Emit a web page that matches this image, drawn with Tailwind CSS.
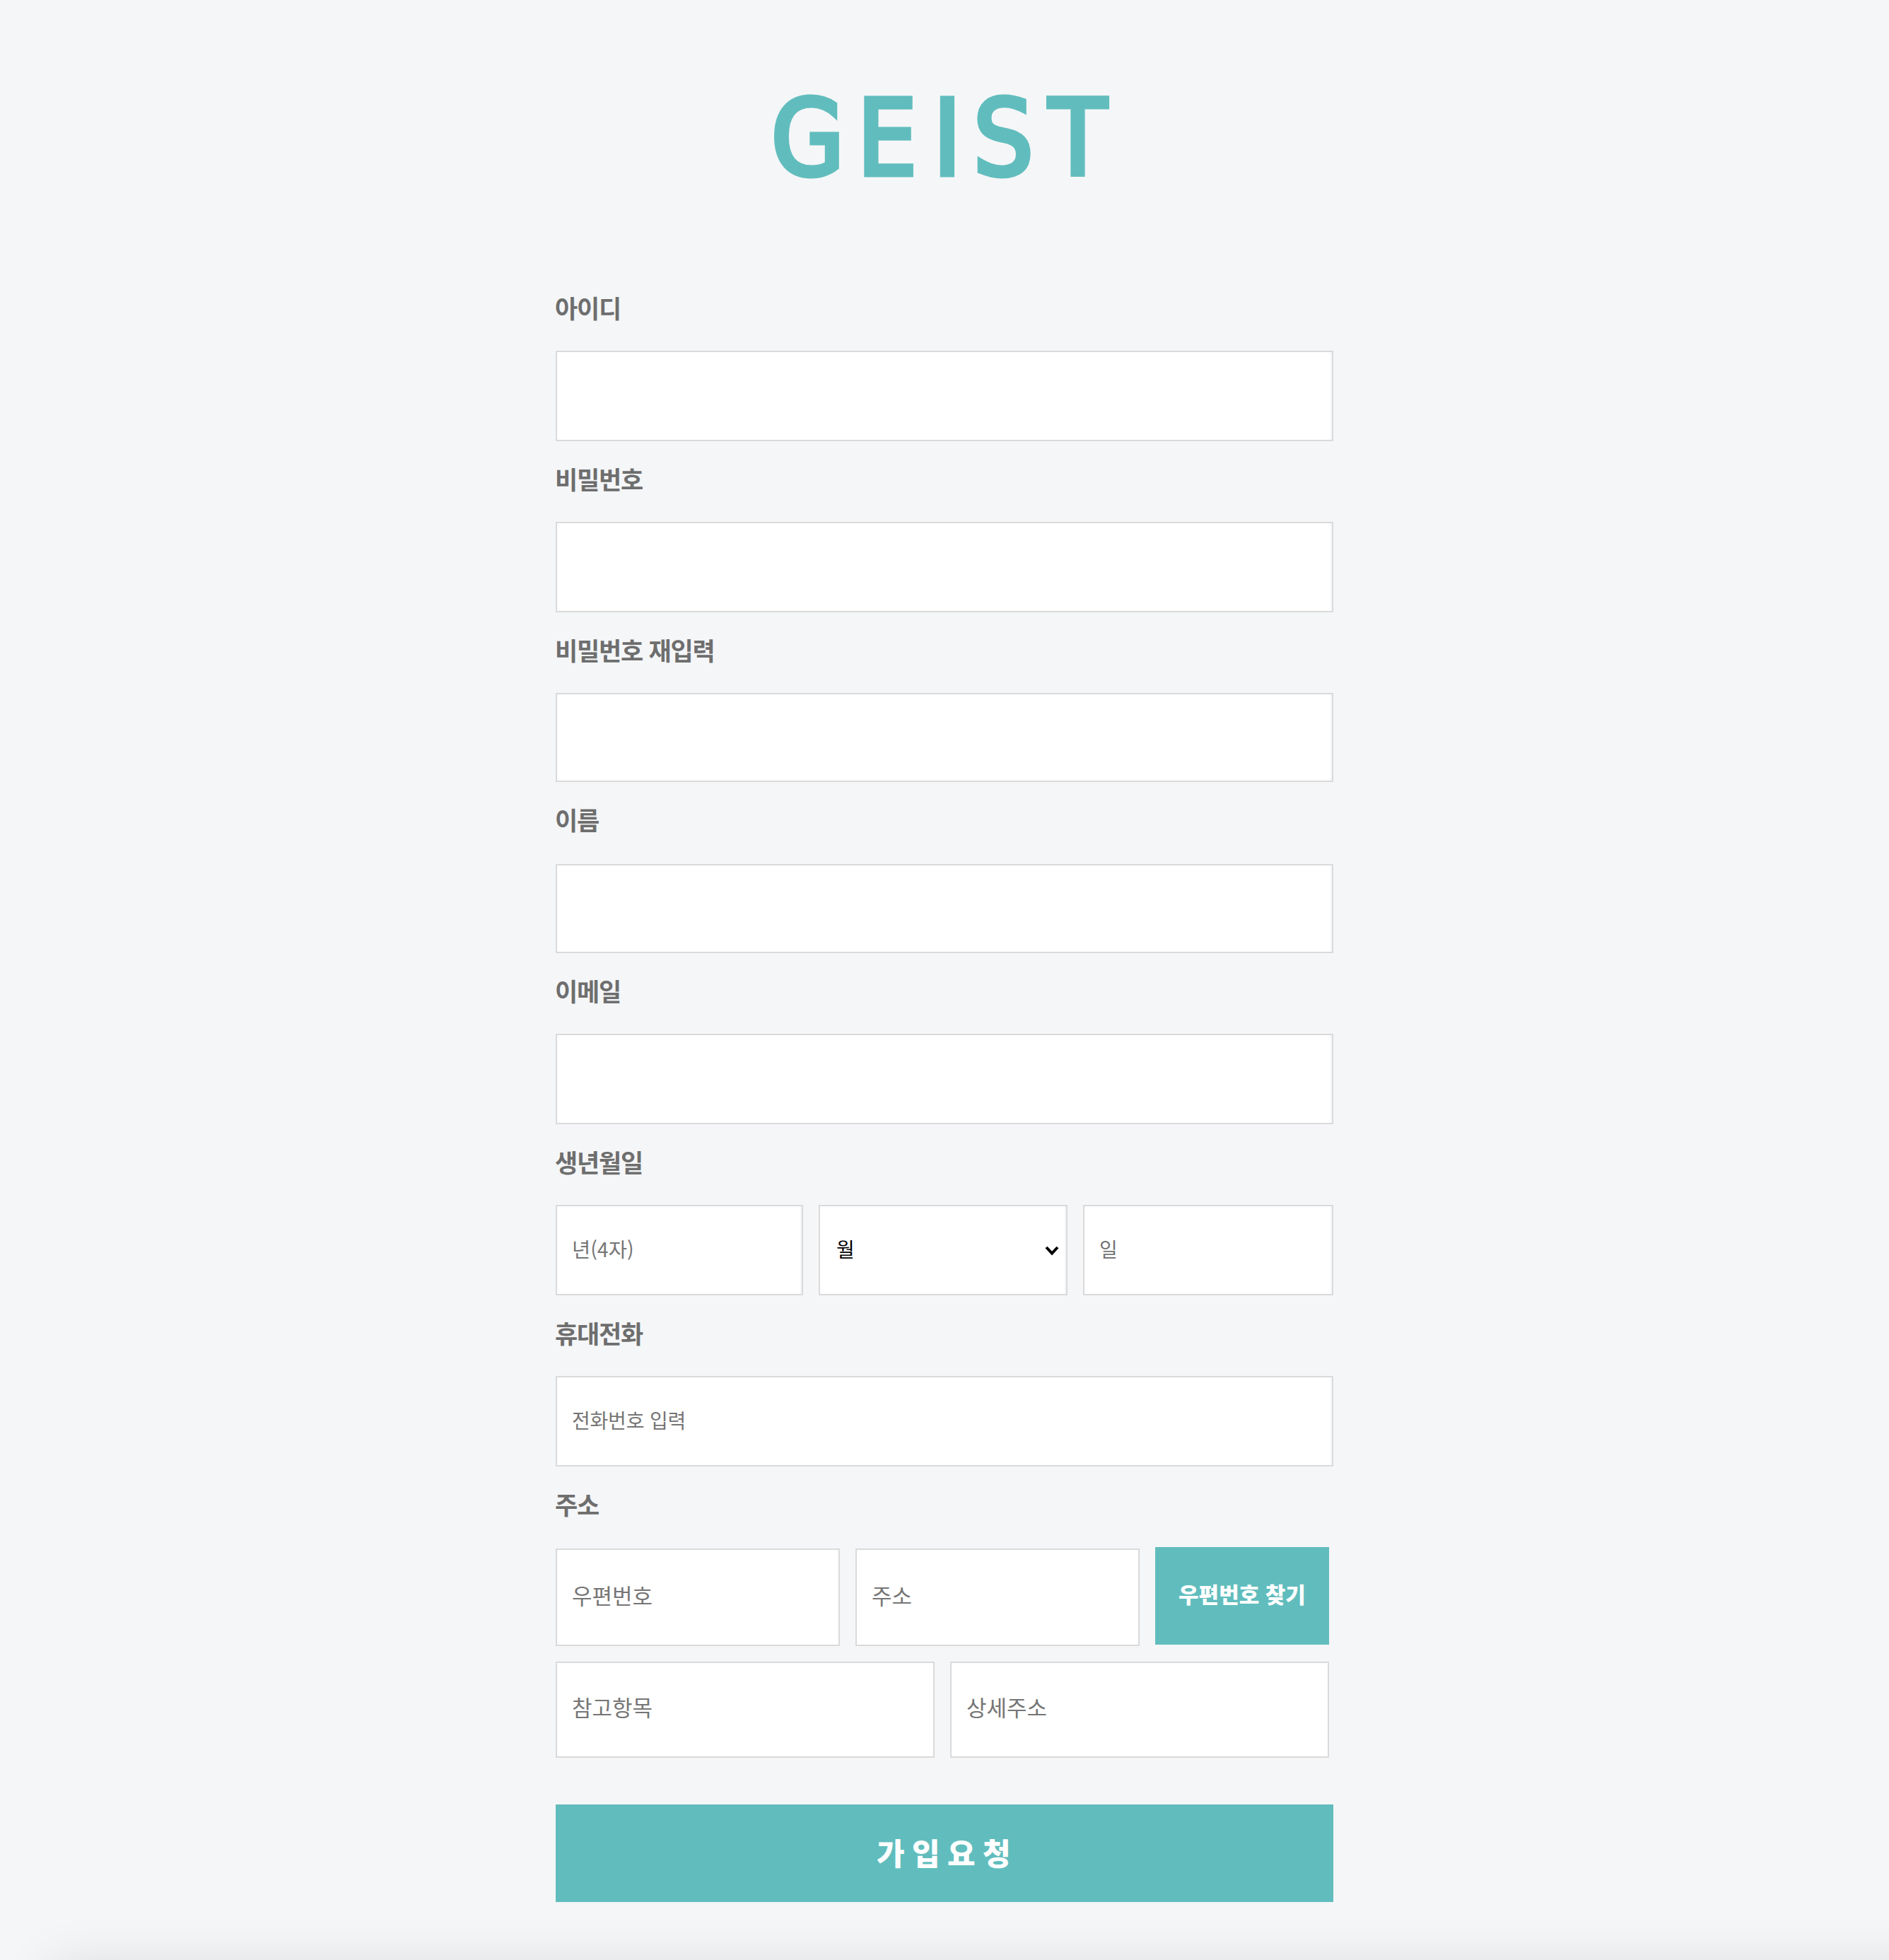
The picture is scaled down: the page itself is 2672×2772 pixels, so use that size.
<!DOCTYPE html>
<html lang="ko">
<head>
<meta charset="utf-8">
<title>GEIST</title>
<script src="https://cdn.jsdelivr.net/npm/@tailwindcss/browser@4"></script>
</head>
<body class="bg-[#f5f6f8]">
<div class="relative h-[2772px] w-full overflow-hidden bg-[#f5f6f8] font-['Noto_Sans_CJK_KR',sans-serif]">
<main class="mx-auto flex w-[1100px] flex-col">
  <h1 class="h-[377px] pt-[86px] pl-[305px] font-['DejaVu_Sans_Condensed','DejaVu_Sans',sans-serif] text-[148px] leading-[220px] font-normal whitespace-nowrap text-[#61bdbd] [font-stretch:condensed] [-webkit-text-stroke:7px_#61bdbd]"><span class="tracking-[18.5px]">G</span><span class="tracking-[23.5px]">E</span><span class="tracking-[17.4px]">I</span><span class="tracking-[22.1px]">S</span><span>T</span></h1>
  <form class="flex flex-col">
    <label class="-ml-px flex h-[119px] items-center pb-[3px] text-[35px] font-bold tracking-[-1.2px] text-[#6e6e6e]">아이디</label>
    <input class="h-[128px] border-2 border-[#dadada] bg-white px-[22px] shadow-[inset_-2px_0_0_#f5f6f7]">
    <label class="-ml-px flex h-[114px] items-center pb-[7px] text-[35px] font-bold tracking-[-1.2px] text-[#6e6e6e]">비밀번호</label>
    <input class="h-[128px] border-2 border-[#dadada] bg-white px-[22px] shadow-[inset_-2px_0_0_#f5f6f7]">
    <label class="-ml-px flex h-[114px] items-center pb-[7px] text-[35px] font-bold tracking-[-1.2px] text-[#6e6e6e]">비밀번호 재입력</label>
    <input class="h-[126px] border-2 border-[#dadada] bg-white px-[22px] shadow-[inset_-2px_0_0_#f5f6f7]">
    <label class="-ml-px flex h-[116px] items-center pb-[9px] text-[35px] font-bold tracking-[-1.2px] text-[#6e6e6e]">이름</label>
    <input class="h-[126px] border-2 border-[#dadada] bg-white px-[22px] shadow-[inset_-2px_0_0_#f5f6f7]">
    <label class="-ml-px flex h-[114px] items-center pb-[7px] text-[35px] font-bold tracking-[-1.2px] text-[#6e6e6e]">이메일</label>
    <input class="h-[128px] border-2 border-[#dadada] bg-white px-[22px] shadow-[inset_-2px_0_0_#f5f6f7]">
    <label class="-ml-px flex h-[114px] items-center pb-[7px] text-[35px] font-bold tracking-[-1.2px] text-[#6e6e6e]">생년월일</label>
    <div class="flex h-[128px] gap-[22px]">
      <input placeholder="년(4자)" class="w-[350px] border-2 border-[#dadada] bg-white px-[21px] pb-[3px] text-[28.5px] shadow-[inset_-2px_0_0_#f5f6f7] placeholder:text-[#757575]">
      <div class="relative flex w-[352px]">
        <select class="w-full appearance-none border-2 border-[#dadada] bg-white px-[23px] pb-[4px] text-[28px] text-black shadow-[inset_-2px_0_0_#f5f6f7]"><option>월</option></select>
        <svg class="absolute top-[58px] right-[12px]" width="20" height="14" viewBox="0 0 20 14" fill="none" stroke="#000" stroke-width="4"><path d="M2 2 L10 10.5 L18 2"/></svg>
      </div>
      <input placeholder="일" class="w-[354px] border-2 border-[#dadada] bg-white px-[21px] pb-[4px] text-[28px] shadow-[inset_-2px_0_0_#f5f6f7] placeholder:text-[#757575]">
    </div>
    <label class="-ml-px flex h-[114px] items-center pb-[7px] text-[35px] font-bold tracking-[-1.2px] text-[#6e6e6e]">휴대전화</label>
    <input placeholder="전화번호 입력" class="h-[128px] border-2 border-[#dadada] bg-white px-[21px] pb-[4px] text-[28px] tracking-[-0.2px] shadow-[inset_-2px_0_0_#f5f6f7] placeholder:text-[#757575]">
    <label class="-ml-px flex h-[114px] items-center pb-[7px] text-[35px] font-bold tracking-[-1.2px] text-[#6e6e6e]">주소</label>
    <div class="flex h-[140px] w-[1094px] gap-[22px]">
      <input placeholder="우편번호" class="mt-[2px] w-[402px] border-2 border-[#dadada] bg-white px-[21px] pb-[5px] text-[31px] placeholder:text-[#757575]">
      <input placeholder="주소" class="mt-[2px] w-[402px] border-2 border-[#dadada] bg-white px-[21px] pb-[5px] text-[31px] placeholder:text-[#757575]">
      <button type="button" class="h-[138px] w-[246px] bg-[#61bdbd] pb-[5px] text-[31px] font-black text-white">우편번호 찾기</button>
    </div>
    <div class="mt-[22px] flex h-[136px] w-[1094px] gap-[22px]">
      <input placeholder="참고항목" class="w-[536px] border-2 border-[#dadada] bg-white px-[21px] pb-[7px] text-[31px] placeholder:text-[#757575]">
      <input placeholder="상세주소" class="w-[536px] border-2 border-[#dadada] bg-white px-[21px] pb-[7px] text-[31px] placeholder:text-[#757575]">
    </div>
    <button type="button" class="mt-[66px] h-[138px] bg-[#61bdbd] pb-[4px] pl-[8px] text-[43px] font-black tracking-[10.5px] text-white">가입요청</button>
  </form>
</main>
<!-- soft shadow rising from the panel below the fold -->
<div class="absolute top-[2772px] right-[-100px] left-[72px] h-[100px] shadow-[0_10px_76px_rgba(0,0,0,0.12)]"></div>
</div>
</body>
</html>
